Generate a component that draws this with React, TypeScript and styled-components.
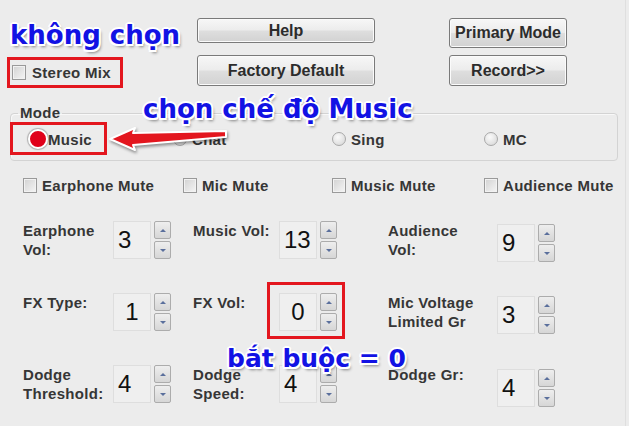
import React from 'react';
import styled, { createGlobalStyle } from 'styled-components';

const GlobalStyle = createGlobalStyle`
  html, body {
    margin: 0;
    padding: 0;
    background: #ececec;
  }
  body {
    font-family: "Liberation Sans", Arial, sans-serif;
  }
`;

// whole window
const Page = styled.div`
  position: relative;
  width: 629px;
  height: 426px;
  overflow: hidden;
  background: #ececec;
  color: #3a3a3a;
  box-shadow: inset -3px 0 0 #ececec, inset -4px 0 0 #dfdfdf;
`;

// top area: stereo mix + buttons
const TopBar = styled.div`
  display: flex;
  padding: 18px 0 0 7px;
`;

const LeftCol = styled.div`
  width: 190px;
  padding-top: 39px;
`;

const ButtonGrid = styled.div`
  display: grid;
  grid-template-columns: 178px 118px;
  grid-template-rows: 30px 31px;
  column-gap: 74px;
  row-gap: 7px;
  align-items: start;
`;

const Button = styled.button<{ $h: number }>`
  height: ${(p) => p.$h}px;
  width: 100%;
  border: 1px solid #7a7a7a;
  border-radius: 3px;
  background: linear-gradient(#f7f7f7 0%, #ececec 48%, #dedede 52%, #d2d2d2 100%);
  box-shadow: inset 0 0 0 1px #fbfbfb;
  font-family: "Liberation Sans", Arial, sans-serif;
  font-weight: bold;
  font-size: 16px;
  color: #2c2c2c;
  padding: 0;
`;

// box round stereo mix (red when marked)
const StereoBox = styled.div<{ $marked?: boolean }>`
  box-sizing: border-box;
  width: 116px;
  height: 31px;
  display: flex;
  align-items: center;
  gap: 6px;
  padding-left: 2px;
  border: 3px solid ${(p) => (p.$marked ? '#e3161e' : 'transparent')};
`;

const Check = styled.span`
  box-sizing: border-box;
  width: 14px;
  height: 15px;
  flex: none;
  border: 1px solid #9a9a9a;
  background: linear-gradient(135deg, #d2d2d2, #f5f5f5);
  box-shadow: inset 0 0 0 1px #f2f2f2;
`;

const Label = styled.span`
  font-weight: bold;
  font-size: 15px;
  letter-spacing: 0.3px;
  line-height: 19px;
  color: #363636;
  white-space: nowrap;
`;

// Mode group
const ModeGroup = styled.fieldset`
  margin: 17px 11px 0 10px;
  padding: 8px 0 11px 17px;
  border: 1px solid #d3d3d3;
  border-radius: 4px;
  box-shadow: inset 1px 1px 0 #f8f8f8;
  min-inline-size: 0;
`;

const Legend = styled.legend`
  margin-left: -10px;
  padding: 0 2px;
  font-weight: bold;
  font-size: 15px;
  line-height: 16px;
  letter-spacing: 0.3px;
  color: #363636;
`;

const RadioRow = styled.div`
  display: grid;
  grid-template-columns: 145px 159px 152px auto;
  height: 20px;
  align-items: center;
`;

const RadioItem = styled.div`
  position: relative;
  display: flex;
  align-items: center;
  justify-self: start;
`;

const RadioDot = styled.span<{ $checked?: boolean }>`
  box-sizing: border-box;
  flex: none;
  border-radius: 50%;
  width: ${(p) => (p.$checked ? 20 : 14)}px;
  height: ${(p) => (p.$checked ? 20 : 14)}px;
  margin-right: ${(p) => (p.$checked ? 0 : 5)}px;
  border: ${(p) => (p.$checked ? '2px solid #fff' : '1px solid #a8a8a8')};
  background: ${(p) =>
    p.$checked ? '#e0001a' : 'radial-gradient(circle at 40% 35%, #fafafa, #d4d4d4)'};
  box-shadow: ${(p) => (p.$checked ? '0 0 1px 1px rgba(0,0,0,0.25)' : 'none')};
`;

// red frame drawn over a control
const Highlight = styled.div<{ $t: number; $r: number; $b: number; $l: number }>`
  position: relative;
  justify-self: start;
  &::after {
    content: '';
    position: absolute;
    top: ${(p) => p.$t}px;
    right: ${(p) => p.$r}px;
    bottom: ${(p) => p.$b}px;
    left: ${(p) => p.$l}px;
    border: 3px solid #e3161e;
    pointer-events: none;
  }
`;

const MuteRow = styled.div`
  margin-top: 15px;
  padding-left: 23px;
  height: 16px;
  display: grid;
  grid-template-columns: 160px 149px 152px auto;
  align-items: center;
`;

const MuteItem = styled.div`
  display: flex;
  align-items: center;
  gap: 5px;
`;

// spin rows
const SpinGrid = styled.div`
  margin-top: 29px;
  padding-left: 23px;
  display: grid;
  grid-template-columns: 90px 80px 86px 109px 109px auto;
  grid-auto-rows: 40px;
  row-gap: 32px;
  align-items: start;
`;

const Spin = styled.div<{ $drop?: number }>`
  display: flex;
  gap: 3px;
  margin-top: ${(p) => p.$drop || 0}px;
`;

const ValueBox = styled.div<{ $center?: boolean }>`
  box-sizing: border-box;
  width: 38px;
  height: 38px;
  border: 1px solid #dedede;
  background: #efefef;
  display: flex;
  align-items: center;
  justify-content: ${(p) => (p.$center ? 'center' : 'flex-start')};
  padding-left: ${(p) => (p.$center ? 0 : 4)}px;
  font-size: 24px;
  color: #111;
`;

const Arrows = styled.div`
  display: flex;
  flex-direction: column;
  gap: 2px;
`;

const ArrowBtn = styled.div<{ $down?: boolean }>`
  box-sizing: border-box;
  width: 17px;
  height: 18px;
  border: 1px solid #acacac;
  border-radius: 2px;
  background: linear-gradient(#eeeeee, #d6d6d6);
  display: flex;
  align-items: center;
  justify-content: center;
  &::before {
    content: '';
    border-left: 3px solid transparent;
    border-right: 3px solid transparent;
    ${(p) => (p.$down ? 'border-top' : 'border-bottom')}: 3px solid #5a6f9c;
  }
`;

// blue notes written on the screenshot
const Note = styled.div<{ $x: number; $y: number; $size?: number }>`
  position: absolute;
  left: ${(p) => p.$x}px;
  top: ${(p) => p.$y}px;
  font-family: "DejaVu Sans", Verdana, sans-serif;
  font-weight: bold;
  font-size: ${(p) => p.$size || 26}px;
  line-height: 30px;
  color: #1212e4;
  white-space: nowrap;
  text-shadow: 2px 0 0 #fff, -2px 0 0 #fff, 0 2px 0 #fff, 0 -2px 0 #fff,
    1.5px 1.5px 0 #fff, -1.5px -1.5px 0 #fff, 1.5px -1.5px 0 #fff, -1.5px 1.5px 0 #fff,
    2px 3px 3px rgba(0, 0, 0, 0.45);
`;

const ArrowSvg = styled.svg`
  position: absolute;
  left: 104px;
  top: 124px;
  overflow: visible;
`;

type SpinProps = { value: string; drop?: number; center?: boolean };

const SpinBox = ({ value, drop, center }: SpinProps) => (
  <Spin $drop={drop}>
    <ValueBox $center={center}>{value}</ValueBox>
    <Arrows>
      <ArrowBtn />
      <ArrowBtn $down />
    </Arrows>
  </Spin>
);

const mutes = ['Earphone Mute', 'Mic Mute', 'Music Mute', 'Audience Mute'];

export default function App() {
  return (
    <Page>
      <GlobalStyle />
      <TopBar>
        <LeftCol>
          <StereoBox $marked>
            <Check />
            <Label>Stereo Mix</Label>
          </StereoBox>
        </LeftCol>
        <ButtonGrid>
          <Button $h={25}>Help</Button>
          <Button $h={30}>Primary Mode</Button>
          <Button $h={31}>Factory Default</Button>
          <Button $h={31}>Record&gt;&gt;</Button>
        </ButtonGrid>
      </TopBar>

      <ModeGroup>
        <Legend>Mode</Legend>
        <RadioRow>
          <Highlight $t={-7} $r={-15} $b={-6} $l={-18}>
            <RadioItem>
              <RadioDot $checked />
              <Label>Music</Label>
            </RadioItem>
          </Highlight>
          <RadioItem>
            <RadioDot />
            <Label>Chat</Label>
          </RadioItem>
          <RadioItem>
            <RadioDot />
            <Label>Sing</Label>
          </RadioItem>
          <RadioItem>
            <RadioDot />
            <Label>MC</Label>
          </RadioItem>
        </RadioRow>
      </ModeGroup>

      <MuteRow>
        {mutes.map((m) => (
          <MuteItem key={m}>
            <Check />
            <Label>{m}</Label>
          </MuteItem>
        ))}
      </MuteRow>

      <SpinGrid>
        <Label>Earphone<br />Vol:</Label>
        <SpinBox value="3" />
        <Label>Music Vol:</Label>
        <SpinBox value="13" />
        <Label>Audience<br />Vol:</Label>
        <SpinBox value="9" drop={3} />

        <Label>FX Type:</Label>
        <SpinBox value="1" center />
        <Label>FX Vol:</Label>
        <Highlight $t={-11} $r={-8} $b={-8} $l={-12}>
          <SpinBox value="0" center />
        </Highlight>
        <Label>Mic Voltage<br />Limited Gr</Label>
        <SpinBox value="3" drop={3} />

        <Label>Dodge<br />Threshold:</Label>
        <SpinBox value="4" />
        <Label>Dodge<br />Speed:</Label>
        <SpinBox value="4" />
        <Label>Dodge Gr:</Label>
        <SpinBox value="4" drop={4} />
      </SpinGrid>

      <ArrowSvg width="126" height="30" viewBox="0 0 126 30">
        <polygon
          points="6,15 31,4 29,9 122,7 122,13 29,21 31,26"
          fill="#e3161e"
          stroke="#fff"
          strokeWidth="2"
          strokeLinejoin="round"
          style={{ filter: 'drop-shadow(1px 2px 1.5px rgba(0,0,0,0.4))' }}
        />
      </ArrowSvg>

      <Note $x={10} $y={20}>không chọn</Note>
      <Note $x={143} $y={94}>chọn chế độ Music</Note>
      <Note $x={227} $y={344} $size={25}>bắt buộc = 0</Note>
    </Page>
  );
}
